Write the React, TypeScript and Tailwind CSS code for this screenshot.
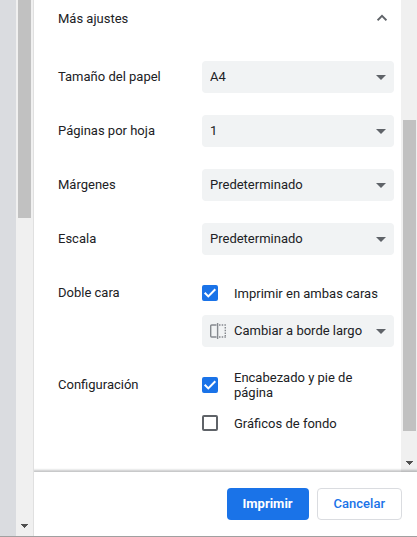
import React, { useId, useState } from "react";

function Caret() {
  return (
    <svg
      className="pointer-events-none absolute right-2 top-3.5 h-[5px] w-[10px]"
      viewBox="0 0 10 5"
      fill="#5f6368"
      aria-hidden="true"
    >
      <path d="M0 0h10L5 5z" />
    </svg>
  );
}

function BindingIcon() {
  return (
    <svg
      className="pointer-events-none absolute left-2 top-2 h-4 w-4"
      viewBox="0 0 16 16"
      fill="none"
      stroke="#85898e"
      aria-hidden="true"
    >
      <path d="M6.5 2H1.7a1 1 0 0 0-1 1v10a1 1 0 0 0 1 1h4.800" strokeWidth="1.4" />
      <path d="M7.6 0v16" strokeWidth="1.4" />
      <path d="M9 2h7M9 14h7" strokeWidth="1.4" strokeDasharray="1.5 1.2" />
      <path d="M15.300 4v9" strokeWidth="1.4" strokeDasharray="1.5 1.2" />
    </svg>
  );
}

type SelectProps = { id?: string; label?: string; options: string[]; icon?: boolean };

function Select({ id, label, options, icon }: SelectProps) {
  return (
    <div className="relative h-8">
      <select
        id={id}
        aria-label={label}
        className={`block h-8 w-full appearance-none rounded bg-[#f1f3f4] pr-7 text-[13px] text-[#202124] outline-none ${
          icon ? "pl-8" : "pl-2"
        }`}
      >
        {options.map((o) => (
          <option key={o}>{o}</option>
        ))}
      </select>
      {icon && <BindingIcon />}
      <Caret />
    </div>
  );
}

function SelectRow({ label, options }: { label: string; options: string[] }) {
  const id = useId();
  return (
    <div className="flex h-[54px] items-center">
      <label htmlFor={id} className="flex-1">
        {label}
      </label>
      <div className="w-48">
        <Select id={id} options={options} />
      </div>
    </div>
  );
}

function Checkbox({ label, initial = false }: { label: string; initial?: boolean }) {
  const [checked, setChecked] = useState(initial);
  return (
    <label className="flex min-h-4 items-center gap-4">
      <span className="relative h-4 w-4 shrink-0">
        <input
          type="checkbox"
          checked={checked}
          onChange={(e) => setChecked(e.target.checked)}
          className="block h-4 w-4 appearance-none rounded-[2px] border-2 border-[#5f6368] bg-white checked:border-[#1a73e8] checked:bg-[#1a73e8]"
        />
        {checked && (
          <svg
            className="pointer-events-none absolute inset-0 h-4 w-4"
            viewBox="0 0 16 16"
            fill="none"
            stroke="#fff"
            strokeWidth="2"
            aria-hidden="true"
          >
            <path d="M2.7 7.8l3.6 3.6 7-7.2" />
          </svg>
        )}
      </span>
      <span className="leading-[15px]">{label}</span>
    </label>
  );
}

function ScrollArrow() {
  return (
    <svg className="h-1 w-[7px]" viewBox="0 0 7 4" fill="#505050" shapeRendering="crispEdges" aria-hidden="true">
      <path d="M0 0h7v1H6v1H5v1H4v1H3V3H2V2H1V1H0z" />
    </svg>
  );
}

export default function App() {
  const [open, setOpen] = useState(true);
  return (
    <div className="flex h-screen border-b border-[#a0a0a0] bg-white font-[Roboto,sans-serif] text-[13px] text-[#202124]">
      <div className="w-4 shrink-0 bg-[#dadce0]" />
      <div className="flex w-[18px] shrink-0 flex-col items-center justify-between border-r border-[#e0e0e0] bg-[#f0f0f0] pb-2">
        <div className="h-[218px] w-[13px] bg-[#c1c1c1]" />
        <ScrollArrow />
      </div>

      <div className="flex min-w-0 flex-1 flex-col">
        <div className="flex min-h-0 flex-1">
          <main className="min-w-0 flex-1 overflow-hidden pl-6 pr-[7px]">
            <button
              type="button"
              aria-expanded={open}
              onClick={() => setOpen(!open)}
              className="mb-3 flex h-[38px] w-full items-center justify-between pr-[7px]"
            >
              <span>Más ajustes</span>
              <svg
                className="h-2.5 w-2.5"
                viewBox="0 0 10 10"
                fill="none"
                stroke="#5f6368"
                strokeWidth="1.9"
                aria-hidden="true"
              >
                <path d="M.6 6.300L5 1.900l4.400 4.400" />
              </svg>
            </button>

            {open && (
              <>
                <SelectRow label="Tamaño del papel" options={["A4", "A3", "A5"]} />
                <SelectRow label="Páginas por hoja" options={["1", "2", "4"]} />
                <SelectRow label="Márgenes" options={["Predeterminado", "Ninguno"]} />
                <SelectRow label="Escala" options={["Predeterminado", "Personalizado"]} />

                <div role="group" aria-label="Doble cara" className="flex pt-[19px]">
                  <span className="flex-1 leading-4">Doble cara</span>
                  <div className="flex w-48 flex-col gap-3.5">
                    <Checkbox label="Imprimir en ambas caras" initial />
                    <Select
                      label="Borde"
                      options={["Cambiar a borde largo", "Cambiar a borde corto"]}
                      icon
                    />
                  </div>
                </div>

                <div role="group" aria-label="Configuración" className="flex pt-[23px]">
                  <span className="flex-1 leading-[30px]">Configuración</span>
                  <div className="flex w-48 flex-col gap-[15px] pr-8">
                    <Checkbox label="Encabezado y pie de página" initial />
                    <Checkbox label="Gráficos de fondo" />
                  </div>
                </div>
              </>
            )}
          </main>
          <div className="flex w-4 shrink-0 flex-col items-center justify-between bg-[#f0f0f0] pb-[7px] pt-[120px]">
            <div className="h-[311px] w-[13px] bg-[#c1c1c1]" />
            <ScrollArrow />
          </div>
        </div>

        <footer className="relative flex justify-end gap-2 bg-white py-4 pr-[15px] shadow-[0_-1px_2px_1px_rgba(60,64,67,0.3)] [clip-path:inset(-4px_0_0_0)]">
          <button
            type="button"
            className="h-8 rounded bg-[#1a73e8] px-4 font-bold text-white"
          >
            Imprimir
          </button>
          <button
            type="button"
            className="h-8 rounded border border-[#dadce0] bg-white px-4 font-medium text-[#1a73e8]"
          >
            Cancelar
          </button>
        </footer>
      </div>
    </div>
  );
}
